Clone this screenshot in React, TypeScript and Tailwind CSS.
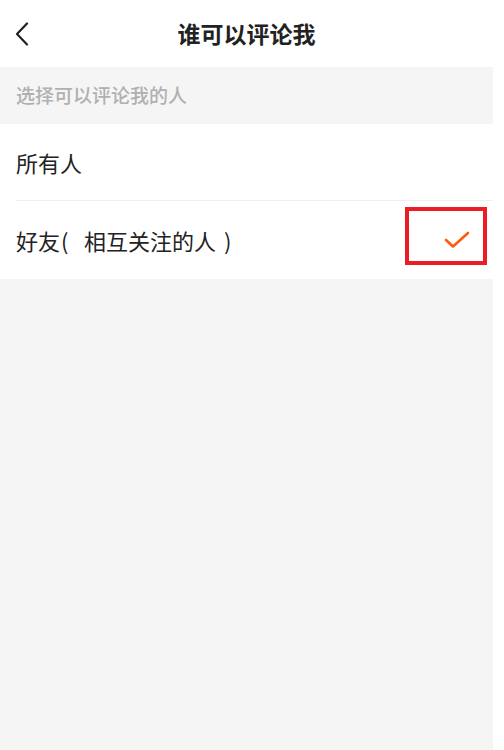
import * as React from "react"

const font = { fontFamily: '"Noto Sans CJK SC", "Noto Sans", sans-serif' }

function BackIcon() {
    return (
        <svg width="16" height="24" viewBox="0 0 16 24" fill="none" className="text-[#222]">
            <path d="M13 1.5 L3 12 L13 22.5" stroke="currentColor" strokeWidth="2.2" strokeLinecap="round" strokeLinejoin="round" />
        </svg>
    )
}

function CheckIcon() {
    return (
        <svg width="26" height="18" viewBox="0 0 26 18" fill="none">
            <path d="M2 9 L9 15.5 L24 2" stroke="#ff5a0a" strokeWidth="2.6" strokeLinecap="round" strokeLinejoin="round" />
        </svg>
    )
}

export default function App() {
    return (
        <div className="min-h-[750px] w-[504px] bg-white" style={font}>
            <div className="flex min-h-[750px] w-[493px] flex-col bg-[#f5f5f5]">
                {/* Header */}
                <div className="relative flex h-[67px] items-center justify-center bg-white">
                    <div className="absolute left-[14px] top-[22px]">
                        <BackIcon />
                    </div>
                    <h1 className="text-[23px] font-bold text-[#222]">谁可以评论我</h1>
                </div>

                {/* Section label */}
                <div className="flex h-[57px] items-center px-4 text-[19px] font-medium text-[#b0b0b0]">
                    选择可以评论我的人
                </div>

                {/* Options */}
                <div className="bg-white pl-4">
                    <div className="flex h-[77px] items-center border-b border-[#efefef] text-[22px] text-[#222]">
                        所有人
                    </div>
                    <div className="flex h-[78px] justify-between text-[22px] text-[#222]">
                        <span className="self-center">
                            好友<span className="inline-block w-[24px] pl-[1px]">(</span>相互关注的人<span className="ml-[8px]">)</span>
                        </span>
                        <div className="mr-[6px] mt-[6px] flex h-[58px] w-[82px] items-end justify-end border-4 border-[#ec1c24] pb-[12px] pr-[13px]">
                            <CheckIcon />
                        </div>
                    </div>
                </div>
            </div>
        </div>
    )
}
